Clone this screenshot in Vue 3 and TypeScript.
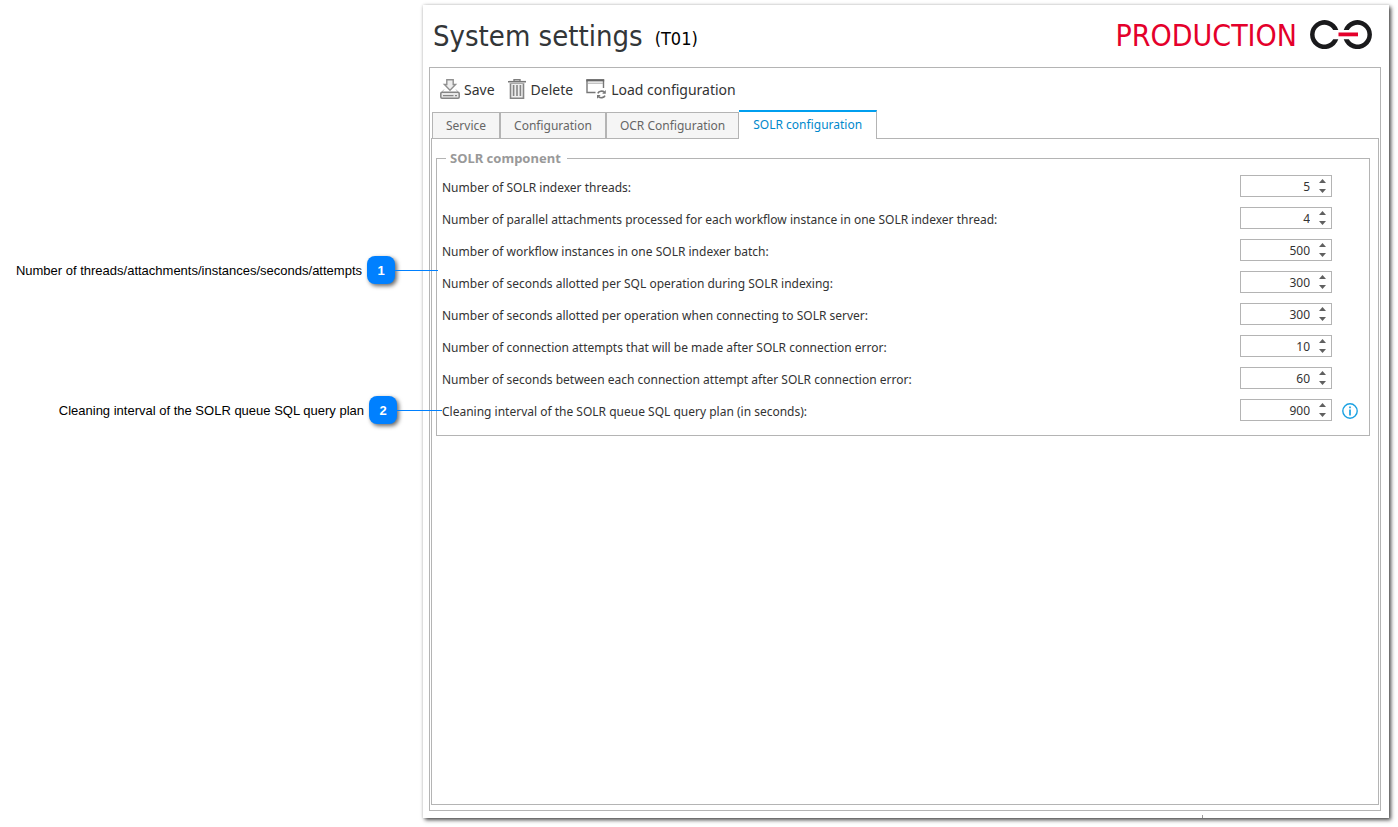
<script setup lang="ts">
import { ref } from 'vue'

interface Setting {
  id: string
  label: string
  value: number
  info?: boolean
}

const tabs = ['Service', 'Configuration', 'OCR Configuration', 'SOLR configuration']
const activeTab = ref('SOLR configuration')

const settings = ref<Setting[]>([
  { id: 'threads', label: 'Number of SOLR indexer threads:', value: 5 },
  { id: 'attachments', label: 'Number of parallel attachments processed for each workflow instance in one SOLR indexer thread:', value: 4 },
  { id: 'instances', label: 'Number of workflow instances in one SOLR indexer batch:', value: 500 },
  { id: 'sql-seconds', label: 'Number of seconds allotted per SQL operation during SOLR indexing:', value: 300 },
  { id: 'server-seconds', label: 'Number of seconds allotted per operation when connecting to SOLR server:', value: 300 },
  { id: 'attempts', label: 'Number of connection attempts that will be made after SOLR connection error:', value: 10 },
  { id: 'attempt-seconds', label: 'Number of seconds between each connection attempt after SOLR connection error:', value: 60 },
  { id: 'cleaning', label: 'Cleaning interval of the SOLR queue SQL query plan (in seconds):', value: 900, info: true },
])

const callouts = [
  { number: 1, text: 'Number of threads/attachments/instances/seconds/attempts', target: 'to-group' },
  { number: 2, text: 'Cleaning interval of the SOLR queue SQL query plan', target: 'to-label' },
]

function step(setting: Setting, amount: number) {
  setting.value = Math.max(0, setting.value + amount)
}
</script>

<template>
  <div class="page">
    <aside class="callouts">
      <div v-for="c in callouts" :key="c.number" class="callout" :class="c.target">
        <span class="callout-text">{{ c.text }}</span>
        <span class="badge">{{ c.number }}</span>
        <span class="connector"></span>
      </div>
    </aside>

    <main class="panel">
      <header class="header">
        <h1>System settings</h1>
        <span class="code">(T01)</span>
        <span class="environment">PRODUCTION</span>
        <svg class="logo" width="62" height="29" viewBox="0 0 62 29" aria-hidden="true">
          <path d="M28.300 10A14.500 14.500 0 1 0 28.300 19.200H23.200A9.900 9.900 0 1 1 23.200 10Z" fill="#1a1a1c" />
          <path d="M33.700 10A14.500 14.500 0 1 1 33.700 19.200H38.800A9.900 9.900 0 1 0 38.800 10Z" fill="#1a1a1c" />
          <rect x="27.500" y="11.300" width="21.500" height="6" fill="#fff" />
          <rect x="28.500" y="12.500" width="19.500" height="3.800" fill="#e4002b" />
        </svg>
      </header>

      <div class="frame">
        <div class="toolbar">
          <button type="button" class="tool">
            <svg width="20" height="20" viewBox="0 0 20 20" aria-hidden="true">
              <path d="M6.800 .8H13.200V5.500H15.600L10 11.200L4.400 5.500H6.800Z" fill="#eee" stroke="#909090" stroke-width="1.400" />
              <path d="M4 10.500L1.500 13.500M16 10.500L18.500 13.500" stroke="#bbb" />
              <rect x=".8" y="13.200" width="18.400" height="6" rx="1.200" fill="#e8e8e8" stroke="#858585" stroke-width="1.500" />
              <path d="M3 16.700H13.500M15 16.700H17" stroke="#858585" stroke-width="1.300" />
            </svg>
            <span>Save</span>
          </button>
          <button type="button" class="tool delete">
            <svg width="18" height="20" viewBox="0 0 18 20" aria-hidden="true">
              <path d="M6 2V.7H12V2" fill="none" stroke="#7e7e7e" stroke-width="1.400" />
              <path d="M0 2.700H18" stroke="#777" stroke-width="1.600" />
              <path d="M2.500 4V19.200H15.500V4" fill="#eee" stroke="#858585" stroke-width="1.600" />
              <path d="M2 4.500H16" stroke="#aaa" />
              <path d="M5.600 6V17M9 6V17M12.400 6V17" stroke="#858585" stroke-width="1.600" />
            </svg>
            <span>Delete</span>
          </button>
          <button type="button" class="tool load">
            <svg width="21" height="20" viewBox="0 0 21 20" aria-hidden="true">
              <path d="M9.500 13.500H1V1.300H17.500V9" fill="none" stroke="#777" stroke-width="1.400" />
              <path d="M.3 1.300H18.200" stroke="#666" stroke-width="2.200" />
              <path d="M2 4.200H17" stroke="#aaa" />
              <g fill="none" stroke="#777" stroke-width="1.600">
                <path d="M11.800 14.300A4 3.500 0 0 1 18.400 13.200M19 16.600A4 3.500 0 0 1 12.500 17.700" />
              </g>
              <path d="M19.800 11V14.800H16.200ZM11 19.800V16H14.600Z" fill="#777" />
            </svg>
            <span>Load configuration</span>
          </button>
        </div>

        <div class="tabs" role="tablist">
          <button
            v-for="tab in tabs"
            :key="tab"
            type="button"
            role="tab"
            class="tab"
            :class="{ active: tab === activeTab }"
            :aria-selected="tab === activeTab"
            @click="activeTab = tab"
          >{{ tab }}</button>
        </div>

        <section class="content" role="tabpanel">
          <fieldset class="group">
            <legend>SOLR component</legend>
            <div v-for="s in settings" :key="s.id" class="row">
              <label :for="s.id">{{ s.label }}</label>
              <div class="spinner">
                <input :id="s.id" v-model.number="s.value" type="number" />
                <div class="arrows">
                  <button type="button" aria-label="Increase" @click="step(s, 1)">
                    <svg width="7" height="4" viewBox="0 0 7 4"><path d="M0 4L3.500 0L7 4Z" fill="#606060" /></svg>
                  </button>
                  <button type="button" aria-label="Decrease" @click="step(s, -1)">
                    <svg width="7" height="4" viewBox="0 0 7 4"><path d="M0 0L3.500 4L7 0Z" fill="#606060" /></svg>
                  </button>
                </div>
              </div>
              <button v-if="s.info" type="button" class="info" aria-label="Information">
                <svg width="16" height="16" viewBox="0 0 16 16">
                  <circle cx="8" cy="8" r="7.200" fill="none" stroke="#1ba1e2" stroke-width="1.400" />
                  <path d="M8 3.500V5.200M8 6.500V12.500" stroke="#1ba1e2" stroke-width="1.700" />
                </svg>
              </button>
            </div>
          </fieldset>
        </section>
      </div>
    </main>
  </div>
</template>

<style>
body {
  margin: 0;
  background: #fff;
}
</style>

<style scoped>
.page {
  --line: #b4b4b4;
  --ui: "Noto Sans", "Open Sans", sans-serif;
  --heading: "DejaVu Sans Condensed", "DejaVu Sans", sans-serif;
  box-sizing: border-box;
  display: flex;
  min-height: 100vh;
  padding: 5px 9px 9px 0;
  font-family: var(--ui);
  font-size: 12px;
  color: #333;
}

button {
  margin: 0;
  padding: 0;
  border: 0;
  background: none;
  color: inherit;
  font: inherit;
}

svg {
  display: block;
}

.callouts {
  position: relative;
  z-index: 1;
  display: flex;
  flex: none;
  flex-direction: column;
  gap: 112px;
  box-sizing: border-box;
  width: 442px;
  margin-right: -19px;
  padding-top: 251px;
  pointer-events: none;
}

.callout {
  display: flex;
  align-items: center;
  justify-content: flex-end;
  height: 28px;
  color: #000;
  font-family: "Liberation Sans", Arial, sans-serif;
  font-size: 13px;
  white-space: nowrap;
}

.callout.to-group {
  padding-right: 4px;
}

.badge {
  display: flex;
  align-items: center;
  justify-content: center;
  width: 28px;
  height: 28px;
  margin-left: 5px;
  border-radius: 8px;
  background: #0080ff;
  box-shadow: 2px 2px 4px rgba(0, 0, 0, 0.6);
  color: #fff;
  font-weight: bold;
}

.connector {
  width: 43px;
  height: 1px;
  background: #0080ff;
}

.callout.to-label .connector {
  width: 45px;
}

.panel {
  position: relative;
  display: flex;
  flex: 1;
  flex-direction: column;
  box-sizing: border-box;
  min-width: 0;
  padding: 0 8px 7px 6px;
  background: #fff;
  box-shadow: 2px 2px 4px rgba(0, 0, 0, 0.7), 0 0 3px rgba(0, 0, 0, 0.15);
}

.panel::after {
  position: absolute;
  right: 186px;
  bottom: 0;
  width: 1px;
  height: 3px;
  background: #999;
  content: "";
}

.header {
  display: flex;
  align-items: center;
  height: 62px;
  padding: 0 9px 0 4px;
  font-family: var(--heading);
}

h1 {
  margin: 0;
  color: #333638;
  font-size: 29px;
  font-weight: normal;
}

.code {
  margin-left: 12px;
  padding-top: 4px;
  color: #000;
  font-size: 18px;
}

.environment {
  margin-left: auto;
  padding-bottom: 2px;
  color: #e4002b;
  font-size: 30px;
}

.logo {
  margin-left: 13px;
  padding-bottom: 3px;
}

.frame {
  display: flex;
  flex: 1;
  flex-direction: column;
  padding: 0 1px 5px;
  border: 1px solid var(--line);
}

.toolbar {
  display: flex;
  gap: 13px;
  align-items: center;
  height: 42px;
  padding-left: 9px;
  font-size: 14px;
}

.tool {
  display: flex;
  gap: 4px;
  align-items: center;
}

.tool.delete {
  gap: 5px;
}

.tabs {
  display: flex;
  align-items: flex-end;
  height: 28px;
  padding-left: 1px;
}

.tab {
  box-sizing: border-box;
  height: 26px;
  padding: 0 13px;
  border: 1px solid var(--line);
  border-bottom: 0;
  background: #f5f5f5;
  color: #666;
}

.tab.active {
  position: relative;
  height: 29px;
  margin-bottom: -1px;
  padding: 0 14px 2px;
  border-top: 2px solid #009fef;
  border-left: 0;
  background: #fff;
  color: #0088cc;
}

.content {
  flex: 1;
  padding: 10px 8px 8px 4px;
  border: 1px solid var(--line);
}

.group {
  display: flex;
  flex-direction: column;
  gap: 10px;
  min-width: 0;
  margin: 0;
  padding: 8px 10px 14px 5px;
  border: 1px solid var(--line);
}

legend {
  margin-left: 4px;
  padding: 0 6px 0 4px;
  color: #999;
  font-size: 13px;
  font-weight: bold;
  line-height: 18px;
}

.row {
  display: grid;
  grid-template-columns: 1fr 92px 17px;
  column-gap: 10px;
  align-items: center;
  height: 22px;
}

.row label {
  padding-top: 2px;
}

.info {
  padding-top: 2px;
}

.spinner {
  display: flex;
  box-sizing: border-box;
  height: 22px;
  border: 1px solid var(--line);
  background: #fff;
}

input {
  flex: 1;
  box-sizing: border-box;
  min-width: 0;
  padding: 0;
  border: 0;
  outline: 0;
  background: none;
  color: #333;
  font: inherit;
  text-align: right;
  appearance: textfield;
}

input::-webkit-inner-spin-button,
input::-webkit-outer-spin-button {
  margin: 0;
  appearance: none;
}

.arrows {
  display: flex;
  box-sizing: border-box;
  flex-direction: column;
  align-items: center;
  justify-content: space-between;
  width: 21px;
  padding: 3px 0 3px 4px;
}
</style>
